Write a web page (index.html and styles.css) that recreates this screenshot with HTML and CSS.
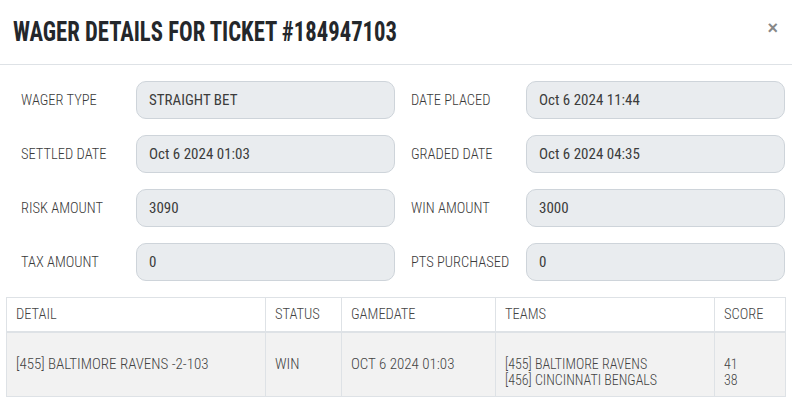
FILE: index.html
```html
<!DOCTYPE html>
<html>
<head>
<meta charset="utf-8">
<link rel="stylesheet" href="styles.css">
</head>
<body>
<div class="modal">
  <div class="modal-header">
    <h1 class="title"><span class="title-text">WAGER DETAILS FOR TICKET #184947103</span></h1>
    <span class="close">×</span>
  </div>
  <div class="form">
    <div class="field"><span class="label">WAGER TYPE</span><div class="input">STRAIGHT BET</div></div>
    <div class="field"><span class="label">DATE PLACED</span><div class="input">Oct 6 2024 11:44</div></div>
    <div class="field"><span class="label">SETTLED DATE</span><div class="input">Oct 6 2024 01:03</div></div>
    <div class="field"><span class="label">GRADED DATE</span><div class="input">Oct 6 2024 04:35</div></div>
    <div class="field"><span class="label">RISK AMOUNT</span><div class="input">3090</div></div>
    <div class="field"><span class="label">WIN AMOUNT</span><div class="input">3000</div></div>
    <div class="field"><span class="label">TAX AMOUNT</span><div class="input">0</div></div>
    <div class="field"><span class="label">PTS PURCHASED</span><div class="input">0</div></div>
  </div>
  <table class="grid">
    <thead>
      <tr><th class="c1">DETAIL</th><th class="c2">STATUS</th><th class="c3">GAMEDATE</th><th class="c4">TEAMS</th><th class="c5">SCORE</th></tr>
    </thead>
    <tbody>
      <tr>
        <td>[455] BALTIMORE RAVENS -2-103</td>
        <td>WIN</td>
        <td>OCT 6 2024 01:03</td>
        <td class="stack"><div class="line">[455] BALTIMORE RAVENS</div><div class="line">[456] CINCINNATI BENGALS</div></td>
        <td class="stack"><div class="line">41</div><div class="line">38</div></td>
      </tr>
    </tbody>
  </table>
</div>
</body>
</html>
```

FILE: styles.css
```css
* { box-sizing: border-box; }
html, body { margin: 0; padding: 0; background: #fff; }
body {
  font-family: "Roboto Condensed", Roboto, sans-serif;
  font-weight: 300;
  color: #212529;
}
.modal { width: 792px; height: 404px; overflow: hidden; }
.modal-header {
  display: flex;
  justify-content: space-between;
  align-items: flex-start;
  height: 65px;
  padding: 12px 14px 0 13px;
  border-bottom: 1px solid #dee2e6;
}
.title {
  margin: 0;
  font-family: "Roboto Condensed", Roboto, sans-serif;
  font-weight: 700;
  font-size: 28px;
  line-height: 40px;
  color: #24272b;
  white-space: nowrap;
}
.title-text {
  display: inline-block;
  transform: scaleX(0.81);
  transform-origin: left center;
}
.close {
  font-family: "Liberation Sans", sans-serif;
  font-weight: 700;
  font-size: 18px;
  color: #888;
  line-height: 20px;
  margin-top: 6px;
}
.form {
  display: grid;
  grid-template-columns: 1fr 1fr;
  column-gap: 16px;
  row-gap: 16px;
  padding: 16px 8px 16px 21px;
}
.field { display: flex; align-items: center; }
.label {
  width: 115px;
  flex: none;
  font-size: 14.5px;
  color: #3a3a3a;
}
.input {
  width: 259px;
  height: 38px;
  border: 1px solid #ced4da;
  border-radius: 10px;
  background: #e9ecef;
  padding: 0 12px;
  display: flex;
  align-items: center;
  font-size: 15px;
  font-weight: 400;
  color: #3c3c3c;
}
.grid {
  margin: 0 0 0 6px;
  width: 780px;
  border-collapse: collapse;
  font-size: 15px;
  color: #444;
}
.grid th, .grid td {
  border: 1px solid #dee2e6;
  text-align: left;
  font-weight: 300;
  padding: 0 9px;
}
.grid th { height: 34px; border-bottom-width: 2px; font-size: 14.5px; }
.grid td { height: 65px; background: #f2f2f2; }
.grid td.stack { padding-top: 16px; font-size: 14px; }
.line { line-height: 16px; height: 16px; }
.c1 { width: 259px; }
.c2 { width: 76px; }
.c3 { width: 154px; }
.c4 { width: 219px; }
```
